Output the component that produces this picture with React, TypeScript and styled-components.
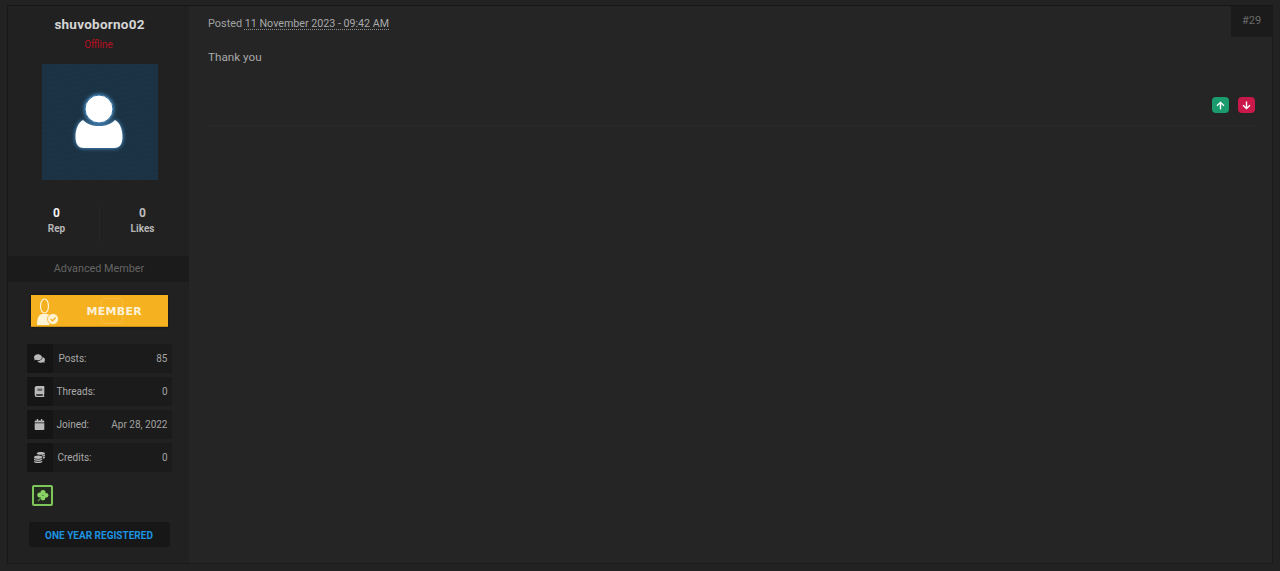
import styled, { createGlobalStyle } from 'styled-components';
import { FaComments, FaBook, FaCalendar, FaCoins, FaArrowUp, FaArrowDown } from 'react-icons/fa';
import type { ReactNode } from 'react';

const GlobalStyle = createGlobalStyle`
  html, body { margin: 0; padding: 0; background: #222222; }
  body { font-family: Roboto, "Liberation Sans", sans-serif; }
  * { box-sizing: border-box; }
`;

const Page = styled.div`
  width: 1280px;
  height: 571px;
  padding: 5px 7px 7px 7px;
  overflow: hidden;
`;

const Post = styled.article`
  display: flex;
  height: 559px;
  border-top: 1px solid #161616;
  border-bottom: 1px solid #1b1b1b;
  border-left: 1px solid #171717;
  border-right: 1px solid #1a1a1a;
`;

const Sidebar = styled.aside`
  width: 181px;
  flex: none;
  background: #212121;
  display: flex;
  flex-direction: column;
  align-items: center;
`;

const UserName = styled.h3`
  margin: 10px 0 0 2px;
  font-size: 13.5px;
  line-height: 16px;
  font-weight: 700;
  letter-spacing: 0.25px;
  color: #d6d6d6;
`;

const Status = styled.div`
  margin-top: 7px;
  font-size: 10px;
  line-height: 12px;
  color: #b81022;
`;

const Avatar = styled.div`
  margin: 13px 0 0 2px;
  width: 116px;
  height: 116px;
  display: flex;
  align-items: center;
  justify-content: center;
  background:
    repeating-linear-gradient(168deg, rgba(255, 255, 255, 0.01) 0 1px, transparent 1px 5px),
    #1a3244;
`;

const StatsRow = styled.div`
  margin-top: 26px;
  padding: 0 4px 0 6px;
  display: flex;
  width: 100%;
  height: 36px;
`;

const StatCell = styled.div`
  flex: 1;
  display: flex;
  flex-direction: column;
  align-items: center;
  gap: 2px;
  & + & { border-left: 1px solid #272727; }
`;

const StatValue = styled.b<{ $dim?: boolean }>`
  font-size: 12px;
  line-height: 14px;
  color: ${p => (p.$dim ? '#bdbdbd' : '#f2f2f2')};
`;

const StatLabel = styled.span`
  font-size: 10px;
  line-height: 13px;
  font-weight: 700;
  color: #b5b5b5;
`;

const Rank = styled.div`
  margin-top: 14px;
  width: 100%;
  height: 26px;
  padding-left: 1px;
  background: #1b1b1b;
  color: #646464;
  font-size: 10.8px;
  line-height: 25px;
  text-align: center;
`;

const Banner = styled.div`
  margin: 13px 0 0 1px;
  width: 137px;
  height: 32px;
  background: #f5b11f;
  border-bottom: 1px solid #c88f17;
  position: relative;
  display: flex;
  align-items: center;
  padding-left: 4px;
  box-shadow: 0 0 2px rgba(0, 0, 0, 0.5);
`;

const BannerMark = styled.span`
  position: absolute;
  left: 70px;
  top: 3px;
  width: 22px;
  height: 26px;
  border: 1px solid rgba(255, 255, 255, 0.14);
  border-radius: 4px;
`;

const BannerText = styled.span`
  margin: 1px 0 0 26px;
  font-family: "DejaVu Sans", sans-serif;
  font-weight: 700;
  font-size: 11px;
  letter-spacing: 0.3px;
  color: #fbf1d8;
`;

const InfoList = styled.ul`
  list-style: none;
  margin: 17px 0 0 1px;
  padding: 0;
  width: 145px;
  display: flex;
  flex-direction: column;
  gap: 4px;
`;

const InfoRow = styled.li`
  height: 29px;
  background: #1b1b1b;
  display: flex;
  align-items: center;
  font-size: 10px;
  color: #a9a9a9;
  padding-right: 4px;
`;

const InfoIcon = styled.span<{ $gap: number }>`
  width: 26px;
  height: 100%;
  background: #151515;
  display: flex;
  align-items: center;
  justify-content: center;
  color: #b9b9b9;
  font-size: 11px;
  margin-right: ${p => p.$gap}px;
`;

const InfoValue = styled.span`
  margin-left: auto;
  color: #a2a2a2;
`;

const AwardRow = styled.div`
  margin: 13px 0 0 1px;
  width: 145px;
  padding-left: 5px;
`;

const Award = styled.div`
  width: 21px;
  height: 21px;
  border: 2px solid #7fc65a;
  border-radius: 2px;
  background: #232b21;
  display: flex;
  align-items: center;
  justify-content: center;
`;

const Pill = styled.div`
  margin: 16px 0 0 1px;
  width: 141px;
  height: 25px;
  border-radius: 3px;
  background: #171717;
  color: #1d93e0;
  font-size: 10px;
  font-weight: 700;
  line-height: 27px;
  text-align: center;
`;

const Main = styled.main`
  flex: 1;
  background: #252525;
  position: relative;
  padding: 10px 17px 0 19px;
`;

const Meta = styled.div`
  font-size: 10.9px;
  line-height: 15px;
  color: #a3a3a3;
`;

const DateText = styled.span`
  font-size: 10.7px;
  color: #a9a9a9;
  text-decoration: underline dotted #8e8e8e;
  text-underline-offset: 2px;
`;

const Body = styled.p`
  margin: 19px 0 0;
  font-size: 11.7px;
  line-height: 15px;
  color: #a8a8a8;
`;

const PostNumber = styled.div`
  position: absolute;
  top: 0;
  right: 0;
  width: 41px;
  height: 31px;
  background: #1b1b1b;
  color: #6a6a6a;
  font-size: 11px;
  line-height: 30px;
  text-align: center;
`;

const Actions = styled.div`
  margin-top: 32px;
  height: 29px;
  display: flex;
  justify-content: flex-end;
  gap: 9px;
  border-bottom: 1px solid #2a2a2a;
`;

const VoteButton = styled.button<{ $color: string }>`
  width: 17px;
  height: 16px;
  padding: 0;
  border: 0;
  border-radius: 4px;
  background: ${p => p.$color};
  color: #fff;
  font-size: 9px;
  display: flex;
  align-items: center;
  justify-content: center;
`;

const PersonGlyph = () => (
  <svg width="52" height="58" viewBox="1 0 52 58" style={{ filter: 'drop-shadow(0 0 2px #5aa8e8)' }}>
    <path d="M10 27 C 14 31 19 33 26 33 C 33 33 38 31 42 27 C 47 30 49.500 36 49.500 44 C 49.500 52 46 55 41 55 L 11 55 C 6 55 2.500 52 2.500 44 C 2.500 36 5 30 10 27 Z" fill="#fff" />
    <circle cx="26" cy="16" r="14" fill="#fff" stroke="#2f6ea0" strokeWidth="1" />
  </svg>
);

const BannerGlyph = () => (
  <svg width="26" height="30" viewBox="0 0 26 30" fill="none">
    <ellipse cx="9.500" cy="10" rx="4" ry="7" stroke="#fff3d6" strokeWidth="1.200" />
    <path d="M2 29 C 2 21 4 19 7 18 L 12 18 C 15 19 17 20 17 22 L 14 29 Z" fill="#fff3d6" />
    <circle cx="18" cy="23" r="5.500" fill="#fff3d6" stroke="#f5b11f" strokeWidth="0.800" />
    <path d="M15.500 23 L17.500 25 L20.500 21.500" stroke="#f5b11f" strokeWidth="1.300" />
  </svg>
);

const CloverGlyph = () => (
  <svg width="13" height="13" viewBox="0 0 13 13" fill="#8ad465">
    <circle cx="7" cy="3.500" r="2.500" />
    <circle cx="3.800" cy="6" r="2.500" />
    <circle cx="10" cy="6.300" r="2.400" />
    <circle cx="7" cy="9" r="2.400" />
    <path d="M5 9 L2 12" stroke="#5f9a45" strokeWidth="1.200" />
  </svg>
);

const info: { icon: ReactNode; label: string; value: string; gap: number }[] = [
  { icon: <FaComments />, label: 'Posts:', value: '85', gap: 6 },
  { icon: <FaBook />, label: 'Threads:', value: '0', gap: 4 },
  { icon: <FaCalendar />, label: 'Joined:', value: 'Apr 28, 2022', gap: 4 },
  { icon: <FaCoins />, label: 'Credits:', value: '0', gap: 5 },
];

function App() {
  return (
    <Page>
      <GlobalStyle />
      <Post>
        <Sidebar>
          <UserName>shuvoborno02</UserName>
          <Status>Offline</Status>
          <Avatar>
            <PersonGlyph />
          </Avatar>
          <StatsRow>
            <StatCell>
              <StatValue>0</StatValue>
              <StatLabel>Rep</StatLabel>
            </StatCell>
            <StatCell>
              <StatValue $dim>0</StatValue>
              <StatLabel>Likes</StatLabel>
            </StatCell>
          </StatsRow>
          <Rank>Advanced Member</Rank>
          <Banner>
            <BannerMark />
            <BannerGlyph />
            <BannerText>MEMBER</BannerText>
          </Banner>
          <InfoList>
            {info.map(row => (
              <InfoRow key={row.label}>
                <InfoIcon $gap={row.gap}>{row.icon}</InfoIcon>
                {row.label}
                <InfoValue>{row.value}</InfoValue>
              </InfoRow>
            ))}
          </InfoList>
          <AwardRow>
            <Award>
              <CloverGlyph />
            </Award>
          </AwardRow>
          <Pill>ONE YEAR REGISTERED</Pill>
        </Sidebar>
        <Main>
          <PostNumber>#29</PostNumber>
          <Meta>
            Posted <DateText>11 November 2023 - 09:42 AM</DateText>
          </Meta>
          <Body>Thank you</Body>
          <Actions>
            <VoteButton $color="#1a9c6e">
              <FaArrowUp />
            </VoteButton>
            <VoteButton $color="#c9184a">
              <FaArrowDown />
            </VoteButton>
          </Actions>
        </Main>
      </Post>
    </Page>
  );
}

export default App;
